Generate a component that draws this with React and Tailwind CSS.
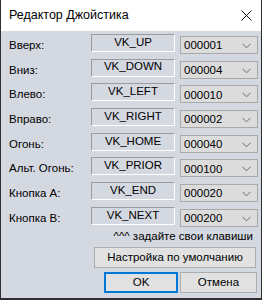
import React from "react";

const rows = [
  ["Вверх:", "VK_UP", "000001"],
  ["Вниз:", "VK_DOWN", "000004"],
  ["Влево:", "VK_LEFT", "000010"],
  ["Вправо:", "VK_RIGHT", "000002"],
  ["Огонь:", "VK_HOME", "000040"],
  ["Альт. Огонь:", "VK_PRIOR", "000100"],
  ["Кнопка A:", "VK_END", "000020"],
  ["Кнопка B:", "VK_NEXT", "000200"],
];

function Chevron() {
  return (
    <svg width="9" height="6" viewBox="0 0 9 6" className="mr-[6px]">
      <path d="M0.5 0.8 L4.5 4.8 L8.5 0.8" fill="none" stroke="#6b6b6b" strokeWidth="1" />
    </svg>
  );
}

export default function App() {
  return (
    <div className="w-[262px] h-[300px] flex flex-col border-x border-b-2 border-[#2f2f2f] font-['Liberation_Sans',Arial,sans-serif] text-[11.5px] text-black overflow-hidden">
      <div className="h-[31px] shrink-0 bg-white flex items-center justify-between pl-[8px] pr-[9px]">
        <span className="text-[12.5px] text-black">Редактор Джойстика</span>
        <svg width="11" height="11" viewBox="0 0 11 11">
          <path d="M0.5 0.5 L10.5 10.5 M10.5 0.5 L0.5 10.5" stroke="#111" strokeWidth="1" />
        </svg>
      </div>
      <div className="flex-1 bg-[#d4d8e0] flex flex-col pt-[3px] pr-[3px]">
        <div className="flex flex-col gap-[6.7px]">
          {rows.map(([label, vk, code]) => (
            <div key={vk} className="flex items-start h-[18px]">
              <div className="w-[90px] pl-[8px] pt-[4px] leading-[14px]">{label}</div>
              <div className="w-[84px] h-[18px] border border-t-[#9c9c9c] border-l-[#9c9c9c] border-r-white border-b-white flex items-center justify-center leading-none pb-[1px]">
                {vk}
              </div>
              <div className="ml-[5px] mt-[2px] w-[78px] h-[18px] border border-[#a9a9a9] bg-[#dcdcdc] flex items-center justify-between pl-[3px] pt-[2px]">
                <span className="leading-none">{code}</span>
                <Chevron />
              </div>
            </div>
          ))}
        </div>
        <div className="mt-[5px] text-right pr-[5px] leading-[13px]">^^^ задайте свои клавиши</div>
        <div className="mt-[4px] ml-[93px] w-[162px] h-[21px] border border-[#adadad] bg-[#e1e1e1] flex items-center justify-center">
          Настройка по умолчанию
        </div>
        <div className="mt-[4px] ml-[103px] flex gap-[2px]">
          <div className="w-[74px] h-[21px] border-2 border-[#0078d7] bg-[#e1e1e1] flex items-center justify-center">OK</div>
          <div className="w-[77px] h-[21px] border border-[#adadad] bg-[#e1e1e1] flex items-center justify-center">Отмена</div>
        </div>
      </div>
    </div>
  );
}
